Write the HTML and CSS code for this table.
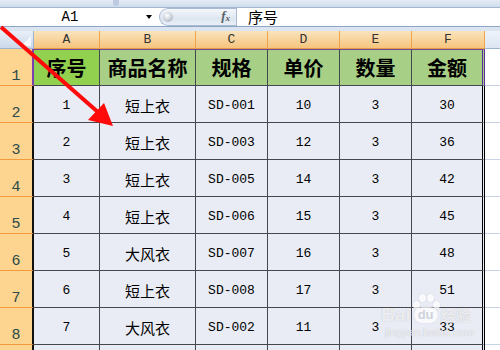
FILE: index.html
```html
<!DOCTYPE html>
<html>
<head>
<meta charset="utf-8">
<link rel="stylesheet" href="styles.css">
</head>
<body>
<div class="app">
  <div class="ribbon-edge"><span class="nub"></span></div>
  <div class="formula-bar">
    <div class="name-box"><span class="name">A1</span><span class="dd"></span></div>
    <div class="fx-pill"><span class="ball"></span><span class="fx">f<sub>x</sub></span></div>
    <div class="formula-input">序号</div>
  </div>
  <div class="bar-gap"></div>
  <div class="sheet">
    <div class="corner"><span class="tri"></span></div>
    <div class="ch">A</div><div class="ch">B</div><div class="ch">C</div><div class="ch">D</div><div class="ch">E</div><div class="ch last">F</div><div class="ch-rest"></div>

    <div class="rh r1">1</div>
    <div class="c h a1">序号</div><div class="c h">商品名称</div><div class="c h">规格</div><div class="c h">单价</div><div class="c h">数量</div><div class="c h f">金额</div><div class="rest"></div>

    <div class="rh">2</div>
    <div class="c n">1</div><div class="c">短上衣</div><div class="c n">SD-001</div><div class="c n">10</div><div class="c n">3</div><div class="c n f">30</div><div class="rest"></div>

    <div class="rh">3</div>
    <div class="c n">2</div><div class="c">短上衣</div><div class="c n">SD-003</div><div class="c n">12</div><div class="c n">3</div><div class="c n f">36</div><div class="rest"></div>

    <div class="rh">4</div>
    <div class="c n">3</div><div class="c">短上衣</div><div class="c n">SD-005</div><div class="c n">14</div><div class="c n">3</div><div class="c n f">42</div><div class="rest"></div>

    <div class="rh">5</div>
    <div class="c n">4</div><div class="c">短上衣</div><div class="c n">SD-006</div><div class="c n">15</div><div class="c n">3</div><div class="c n f">45</div><div class="rest"></div>

    <div class="rh">6</div>
    <div class="c n">5</div><div class="c">大风衣</div><div class="c n">SD-007</div><div class="c n">16</div><div class="c n">3</div><div class="c n f">48</div><div class="rest"></div>

    <div class="rh">7</div>
    <div class="c n">6</div><div class="c">短上衣</div><div class="c n">SD-008</div><div class="c n">17</div><div class="c n">3</div><div class="c n f">51</div><div class="rest"></div>

    <div class="rh">8</div>
    <div class="c n">7</div><div class="c">大风衣</div><div class="c n">SD-002</div><div class="c n">11</div><div class="c n">3</div><div class="c n f">33</div><div class="rest"></div>

    <div class="rh"></div>
    <div class="c n"></div><div class="c"></div><div class="c n"></div><div class="c n"></div><div class="c n"></div><div class="c n f"></div><div class="rest"></div>
  </div>

  <div class="watermark">
    <div class="wm-top"><span class="wm-bai">Bai</span><span class="wm-paw"><span class="toe t1"></span><span class="toe t2"></span><span class="toe t3"></span><span class="toe t4"></span><span class="pad">du</span></span><span class="wm-jy">经验</span></div>
    <div class="wm-url">jingyan.baidu.com</div>
  </div>

  <svg class="arrow" width="500" height="350" viewBox="0 0 500 350">
    <line x1="1" y1="27" x2="99" y2="113" stroke="#ff0a0a" stroke-width="4"/>
    <polygon points="88,120 104,103 113,126" fill="#ff0a0a"/>
  </svg>
</div>
</body>
</html>
```

FILE: styles.css
```css
html, body {
  margin: 0;
  padding: 0;
}
body {
  width: 500px;
  height: 350px;
  overflow: hidden;
  background: #ffffff;
  font-family: "Noto Sans CJK SC", "Noto Sans", sans-serif;
}
.app {
  position: relative;
  width: 500px;
  height: 350px;
  overflow: hidden;
}
.ribbon-edge {
  height: 7px;
  background: linear-gradient(#e6edf7, #cfdbec);
  border-bottom: 1px solid #a3b7d1;
  display: flex;
}
.nub {
  margin-left: 113px;
  width: 6px;
  height: 6px;
  border-radius: 0 0 3px 3px;
  background: #bccbe0;
}
.formula-bar {
  height: 18px;
  display: flex;
  background: #ffffff;
  border-bottom: 1px solid #8ea5c3;
}
.name-box {
  width: 159px;
  display: flex;
  align-items: center;
  position: relative;
}
.name {
  font-family: "Liberation Mono", monospace;
  font-size: 14px;
  color: #000;
  width: 140px;
  text-align: center;
  line-height: 18px;
}
.dd {
  margin-left: 6px;
  width: 0;
  height: 0;
  border-left: 3.5px solid transparent;
  border-right: 3.5px solid transparent;
  border-top: 4px solid #000;
}
.fx-pill {
  width: 77px;
  display: flex;
  align-items: center;
  justify-content: space-between;
  background: linear-gradient(#f4f7fb, #dde6f1 60%, #e9eff7);
  border: 1px solid #a9bbd3;
  border-right: none;
  border-radius: 9px 0 0 9px;
  box-sizing: border-box;
  height: 18px;
  padding: 0 6px 0 3px;
}
.ball {
  width: 10px;
  height: 10px;
  border-radius: 50%;
  background: radial-gradient(circle at 40% 35%, #ffffff, #b7bfca 70%, #9aa5b3);
}
.fx {
  font-family: "Liberation Serif", serif;
  font-style: italic;
  font-weight: bold;
  font-size: 13px;
  color: #5a5f66;
  line-height: 14px;
}
.fx sub {
  font-size: 9px;
  vertical-align: -1px;
}
.formula-input {
  flex: 1;
  border-left: 1px solid #a9bbd3;
  padding-left: 11px;
  font-size: 15px;
  line-height: 18px;
  color: #000;
}
.bar-gap {
  height: 4px;
  background: #dbe4f1;
}
.sheet {
  display: grid;
  grid-template-columns: 34px 66px 96px 72px 72px 72px 73px 15px;
  grid-template-rows: 18px repeat(9, 37px);
}
.sheet > div {
  box-sizing: border-box;
}
.corner {
  background: linear-gradient(#e9eff8, #cbd8ea);
  border-right: 1px solid #9eb4cf;
  border-bottom: 1px solid #9eb4cf;
  position: relative;
}
.tri {
  position: absolute;
  right: 2px;
  bottom: 2px;
  width: 0;
  height: 0;
  border-left: 10px solid transparent;
  border-bottom: 10px solid #f4f7fb;
}
.ch {
  background: linear-gradient(#fae4bd, #f6c47d);
  border-right: 1px solid #f0a24c;
  border-bottom: 1px solid #e99a44;
  font-family: "Liberation Mono", monospace;
  font-size: 13px;
  color: #333;
  display: flex;
  align-items: center;
  justify-content: center;
}
.ch.last {
  border-right: 1px solid #f0a24c;
}
.ch-rest {
  background: linear-gradient(#eef3fa, #dbe5f2);
  border-bottom: 1px solid #9eb4cf;
}
.rh {
  background: #fdd590;
  border-bottom: 1px solid #f29b3c;
  border-right: 2px solid #111;
  font-family: "Liberation Mono", monospace;
  font-size: 15px;
  color: #2a4a4b;
  display: flex;
  align-items: flex-end;
  justify-content: center;
  padding-bottom: 1px;
  line-height: 15px;
}
.rh.r1 {
  border-right: 2px solid #7b3fb0;
}
.c {
  background: #e9ecf5;
  border-right: 1px solid #46484f;
  border-bottom: 1px solid #46484f;
  display: flex;
  align-items: center;
  justify-content: center;
  font-size: 15px;
  color: #000;
  padding-top: 2px;
}
.c.n {
  font-family: "Liberation Mono", monospace;
  font-size: 13px;
}
.c.h {
  background: #a8cf86;
  font-weight: bold;
  font-size: 20px;
  border-top: 1px solid #6f4a9a;
  padding-top: 0;
}
.c.a1 {
  background: #92d050;
}
.c.f {
  border-right: 3px double #000;
}
.c.h.f {
  border-right: 3px double #5a2f9a;
}
.rest {
  background: #ffffff;
  border-bottom: 1px solid #c8d4e6;
}
.arrow {
  position: absolute;
  left: 0;
  top: 0;
  pointer-events: none;
}
.watermark {
  position: absolute;
  left: 381px;
  top: 292px;
  color: rgba(255, 255, 255, 0.75);
  text-shadow: 0 0 1px rgba(110, 110, 120, 0.45);
  pointer-events: none;
}
.wm-top {
  display: flex;
  align-items: flex-end;
  height: 32px;
}
.wm-bai {
  font-family: "Liberation Sans", sans-serif;
  font-weight: bold;
  font-size: 19px;
  line-height: 19px;
}
.wm-paw {
  position: relative;
  width: 28px;
  height: 32px;
  margin: 0 1px;
}
.toe {
  position: absolute;
  width: 7px;
  height: 8px;
  border-radius: 50%;
  background: rgba(255, 255, 255, 0.75);
  box-shadow: 0 0 1px rgba(110, 110, 120, 0.45);
}
.t1 { left: 1px; top: 9px; }
.t2 { left: 7px; top: 2px; }
.t3 { left: 15px; top: 2px; }
.t4 { left: 21px; top: 9px; }
.pad {
  position: absolute;
  left: 2px;
  top: 15px;
  width: 24px;
  height: 16px;
  border-radius: 8px;
  background: rgba(255, 255, 255, 0.75);
  box-shadow: 0 0 1px rgba(110, 110, 120, 0.45);
  font-family: "Liberation Sans", sans-serif;
  font-weight: bold;
  font-size: 13px;
  line-height: 15px;
  text-align: center;
  color: rgba(200, 205, 215, 0.9);
  text-shadow: none;
}
.wm-jy {
  font-size: 15px;
  line-height: 19px;
  font-weight: bold;
}
.wm-url {
  font-family: "Liberation Sans", sans-serif;
  font-size: 11px;
  line-height: 12px;
  margin-left: 4px;
  margin-top: 2px;
}
```
